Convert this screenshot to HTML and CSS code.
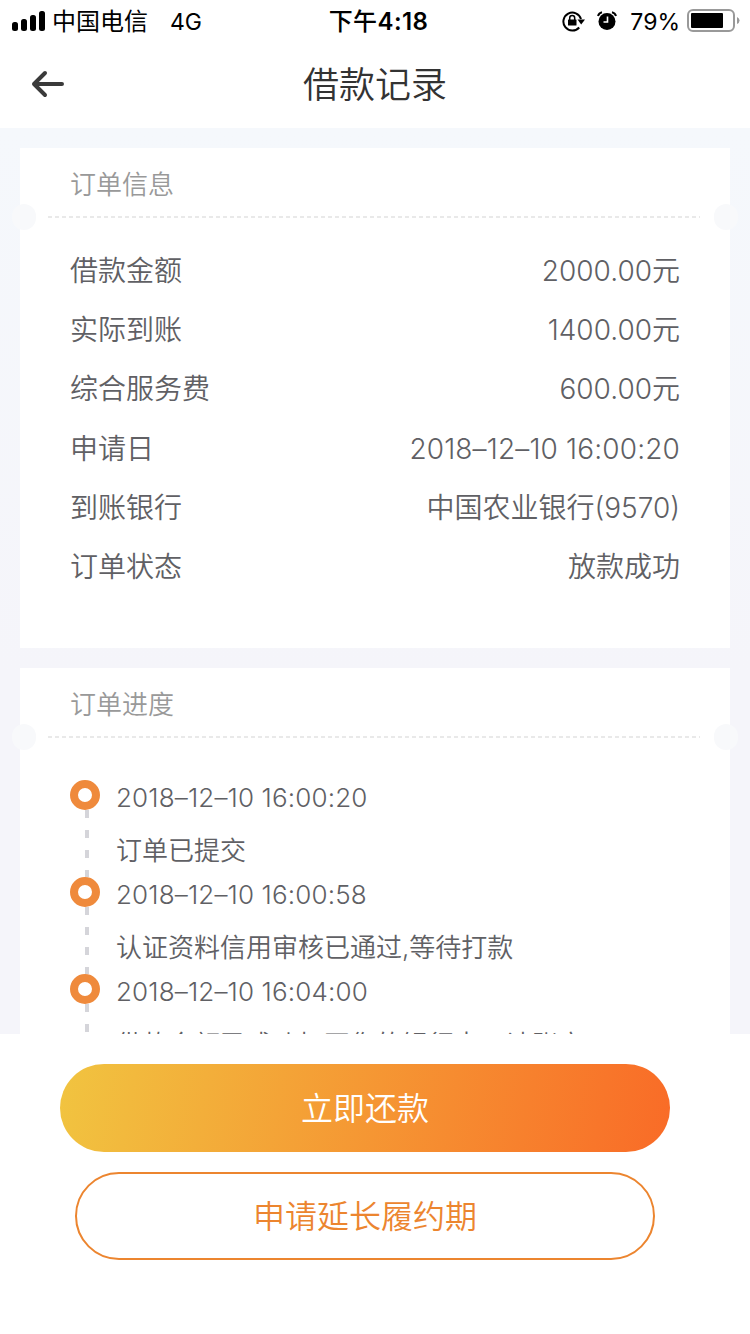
FILE: index.html
```html
<!DOCTYPE html>
<html lang="zh">
<head>
    <meta charset="UTF-8">
    <meta name="viewport" content="width=device-width, initial-scale=1.0">
    <title>借款记录</title>
    <link rel="stylesheet" href="styles.css">
</head>
<body>
    <div class="app">
        <div class="status">
            <div class="status-left">
                <svg class="signal" width="34" height="20" viewBox="0 0 34 20">
                    <rect x="0" y="11" width="6" height="9" rx="2.5"/>
                    <rect x="9" y="8" width="6" height="12" rx="2.5"/>
                    <rect x="18" y="4" width="6" height="16" rx="2.5"/>
                    <rect x="27" y="0" width="6" height="20" rx="2.5"/>
                </svg>
                <span class="carrier">中国电信</span>
                <span class="net">4G</span>
            </div>
            <div class="status-time">下午<b>4:18</b></div>
            <div class="status-right">
                <svg width="24" height="22" viewBox="0 0 24 22">
                    <path d="M17.2 17.500A9 9 0 1 1 19 9" fill="none" stroke="#000" stroke-width="2"/>
                    <path d="M15.500 9.500h7.500l-3.800 5z"/>
                    <rect x="6" y="9.500" width="8.500" height="6" rx="0.500"/>
                    <path d="M7.700 10V8a2.500 2.500 0 0 1 5 0v2" fill="none" stroke="#000" stroke-width="1.500"/>
                </svg>
                <svg class="alarm" width="20" height="20" viewBox="0 0 20 20">
                    <circle cx="10" cy="10.500" r="8.500"/>
                    <path d="M1 5Q2 2 5 1.200M19 5Q18 2 15 1.200" fill="none" stroke="#000" stroke-width="2"/>
                    <path d="M10.500 5.500V11H6.500" fill="none" stroke="#fff" stroke-width="1.600"/>
                </svg>
                <span class="percent">79%</span>
                <svg class="battery" width="54" height="23" viewBox="0 0 54 23">
                    <rect x="1" y="1" width="46" height="21" rx="5" fill="none" stroke="#999" stroke-width="2"/>
                    <rect x="4" y="4" width="32" height="15" rx="1"/>
                    <path d="M50 8q2.500 1 2.500 3.500T50 15z" fill="#999"/>
                </svg>
            </div>
        </div>

        <div class="nav">
            <svg class="back" width="34" height="28" viewBox="0 0 34 28">
                <path d="M14 3L3 14l11 11M3 14h28" fill="none" stroke="#3a3a3a" stroke-width="4" stroke-linecap="round" stroke-linejoin="round"/>
            </svg>
            <h1>借款记录</h1>
        </div>

        <div class="main">
            <div class="card info">
                <h2>订单信息</h2>
                <div class="line"></div>
                <ul>
                    <li><span>借款金额</span><span>2000.00元</span></li>
                    <li><span>实际到账</span><span>1400.00元</span></li>
                    <li><span>综合服务费</span><span>600.00元</span></li>
                    <li><span>申请日</span><span class="date">2018–12–10 16:00:20</span></li>
                    <li><span>到账银行</span><span>中国农业银行(9570)</span></li>
                    <li><span>订单状态</span><span>放款成功</span></li>
                </ul>
            </div>

            <div class="card progress">
                <h2>订单进度</h2>
                <div class="line"></div>
                <div class="step">
                    <i class="dot"></i>
                    <p class="date">2018–12–10 16:00:20</p>
                    <p>订单已提交</p>
                </div>
                <div class="step">
                    <i class="dot"></i>
                    <p class="date">2018–12–10 16:00:58</p>
                    <p>认证资料信用审核已通过,等待打款</p>
                </div>
                <div class="step">
                    <i class="dot"></i>
                    <p class="date">2018–12–10 16:04:00</p>
                    <p>借款金额已成功打至您的银行卡，请账户</p>
                </div>
            </div>
        </div>

        <div class="footer">
            <button class="pay">立即还款</button>
            <button class="delay">申请延长履约期</button>
        </div>
    </div>
</body>
</html>
```
FILE: styles.css
```css
*{
    margin: 0;
    padding: 0;
    box-sizing: border-box;
}
body{
    font-family: Inter, "Noto Sans CJK SC", sans-serif;
    background-color: #fff;
}
.app{
    width: 750px;
    height: 1334px;
    overflow: hidden;

    display: flex;
    flex-direction: column;
}
.status{
    height: 40px;
    padding: 0 12px;
    color: #000;
    font-size: 24px;
    line-height: 38px;

    display: grid;
    grid-template-columns: 1fr auto 1fr;
    align-items: center;
}
.status-left, .status-right{
    display: flex;
    align-items: center;
}
.status-right{
    justify-content: flex-end;
    margin-right: -3px;
}
.status span, .status-time{
    padding-top: 3px;
}
.carrier{
    margin-left: 6px;
}
.net{
    margin-left: 22px;
    font-size: 23px;
}
.status-time{
    padding-left: 7px;
    font-weight: 500;
    letter-spacing: 0.4px;
}
.status-time b{
    font-weight: 600;
}
.alarm{
    margin-left: 11px;
}
.percent{
    margin-left: 13px;
    font-size: 23px;
}
.battery{
    margin-left: 7px;
}
.nav{
    height: 88px;
    padding: 0 31px;

    display: grid;
    grid-template-columns: 1fr auto 1fr;
    align-items: center;
}
.nav h1{
    padding-top: 2px;
    color: #333;
    font-size: 36px;
    font-weight: 350;
    line-height: 86px;
}
.main{
    height: 906px;
    padding: 20px 20px 0;
    overflow: hidden;
    background: linear-gradient(#f5f8fc, #f5f5fa 60%);

    display: flex;
    flex-direction: column;
    gap: 20px;
}
.card{
    flex: none;
    background-color: #fff;
}
.info{
    height: 500px;
}
.progress{
    height: 520px;
}
.card h2{
    height: 68px;
    padding-left: 50px;
    color: #999;
    font-size: 26px;
    font-weight: 350;
    line-height: 73px;
}
/* 虚线和两边的缺口 */
.line{
    position: relative;
    height: 2px;
    margin: 0 30px 0 28px;
    background: repeating-linear-gradient(90deg, #e9e9e9 0 4px, #fff 4px 7px);
}
.line::before, .line::after{
    content: '';
    position: absolute;
    top: -12px;
    width: 24px;
    height: 26px;
    border-radius: 13px;
    background-color: #f8f9fb;
}
.line::before{
    left: -36px;
}
.line::after{
    right: -38px;
}
.info ul{
    padding: 24px 50px 0 50px;
    list-style: none;
}
.info li{
    height: 59.200px;
    color: #606064;
    font-size: 28px;
    font-weight: 350;
    line-height: 59px;

    display: flex;
    justify-content: space-between;
}
.step{
    position: relative;
    height: 97px;
    padding-left: 96px;
    color: #606064;
    font-size: 26px;
    font-weight: 350;
}
.line + .step{
    margin-top: 42px;
}
.step p{
    height: 53px;
    line-height: 36px;
}
.step .date, .info .date{
    font-weight: 300;
    letter-spacing: 0.15px;
}
.step::before{
    content: '';
    position: absolute;
    left: 65px;
    top: 30px;
    width: 4px;
    height: 67px;
    background: repeating-linear-gradient(#d5d5da 0 8px, #fff 8px 20px);
}
.dot{
    position: absolute;
    left: 50px;
    top: 0;
    width: 30px;
    height: 30px;
    border: 8px solid #ef8a3c;
    border-radius: 50%;
    background-color: #fff;
}
.footer{
    padding: 30px 80px 0 60px;

    display: flex;
    flex-direction: column;
    align-items: center;
    gap: 20px;
}
.footer button{
    height: 88px;
    padding-bottom: 4px;
    font-family: inherit;
    font-size: 32px;
    font-weight: 350;
    border-radius: 44px;
}
.pay{
    width: 610px;
    color: #fff;
    border: none;
    background: linear-gradient(100deg, #f1c440, #f96b27);
}
.delay{
    width: 580px;
    color: #ec852f;
    border: 2px solid #ec852f;
    background-color: #fff;
}
```
